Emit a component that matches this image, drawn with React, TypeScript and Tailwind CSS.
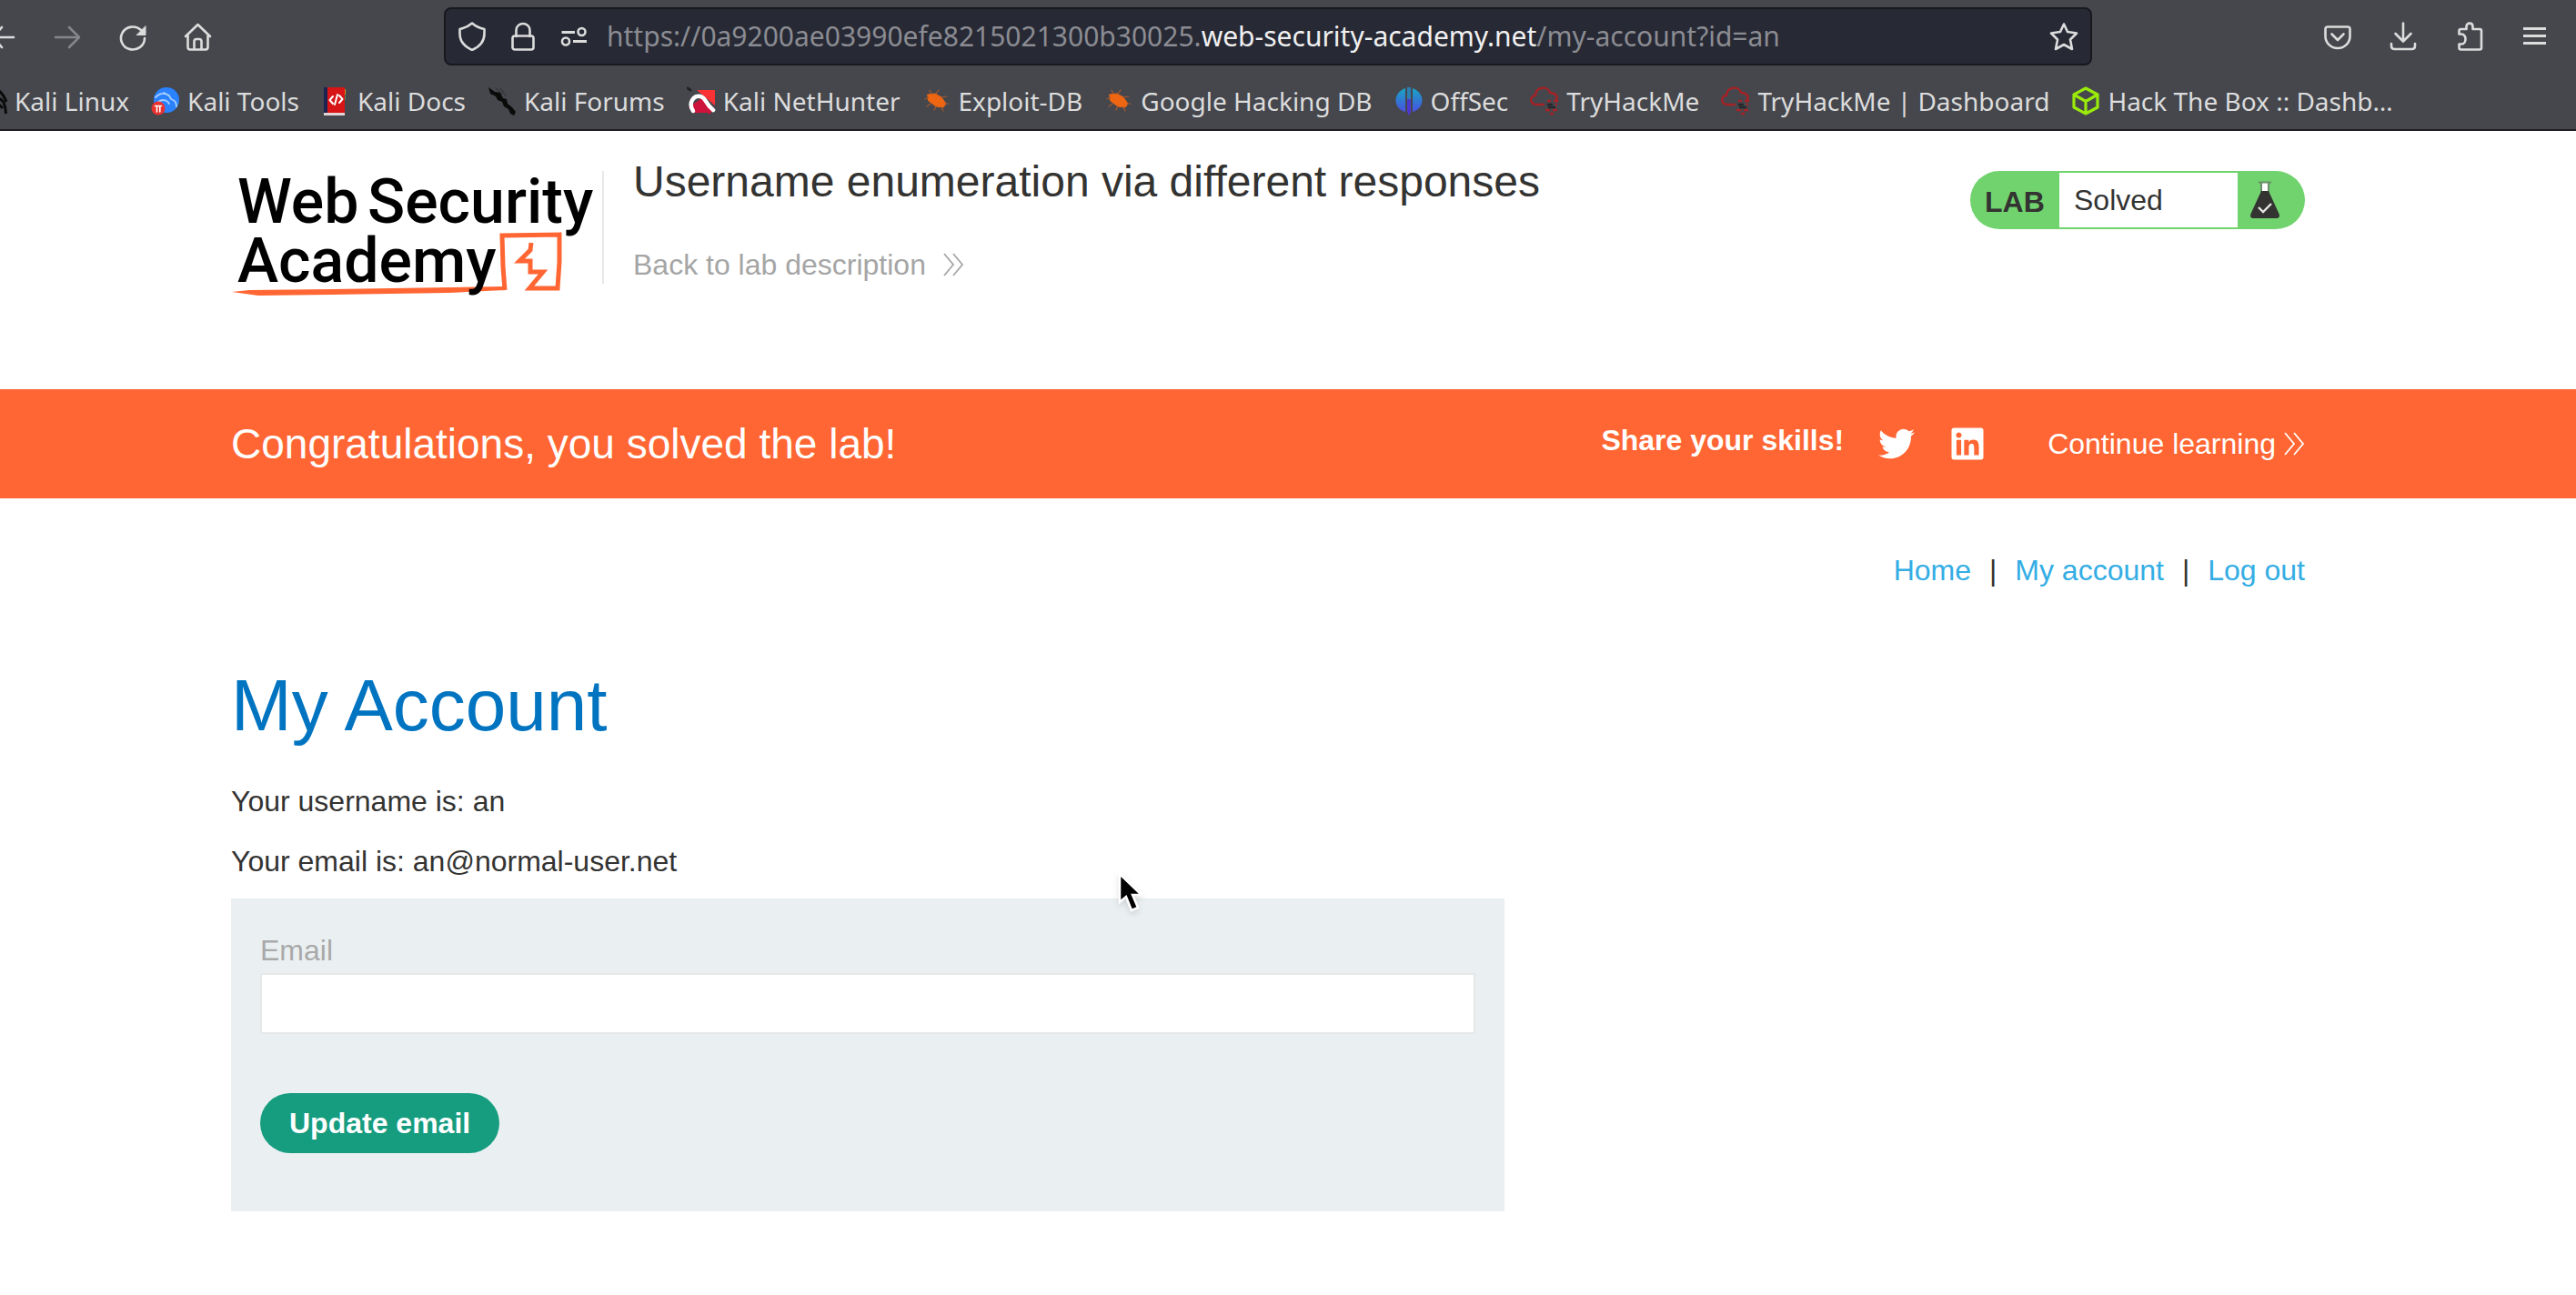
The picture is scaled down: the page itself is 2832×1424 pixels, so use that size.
import React from "react";
import { FaTwitter, FaLinkedin } from "react-icons/fa";

type IconProps = { className?: string; children: React.ReactNode };

function Icon({ className = "", children }: IconProps) {
  return (
    <svg
      viewBox="0 0 32 32"
      aria-hidden="true"
      className={`size-8 shrink-0 ${className}`}
      fill="none"
      stroke="currentColor"
      strokeWidth="2.6"
      strokeLinecap="round"
      strokeLinejoin="round"
    >
      {children}
    </svg>
  );
}

const ToolButton = ({ label, children }: { label: string; children: React.ReactNode }) => (
  <button type="button" aria-label={label} className="shrink-0">
    {children}
  </button>
);

function Toolbar() {
  return (
    <div className="flex h-20 items-center gap-10 pr-[30px]">
      <ToolButton label="Back">
        <svg viewBox="0 0 18 32" className="h-8 w-[18px]" fill="none" stroke="currentColor" strokeWidth="2.6" strokeLinecap="round">
          <path d="M-10 17H15M-8 17L2 6M-8 17L2 28" />
        </svg>
      </ToolButton>
      <ToolButton label="Forward">
        <Icon className="text-[#85868a]">
          <path d="M3 17H29M18 6L29 17L18 28" />
        </Icon>
      </ToolButton>
      <ToolButton label="Reload">
        <Icon>
          <path d="M29 18A13 12.500 0 1 1 25 9" />
          <path d="M30 5V14.500H20.500Z" fill="currentColor" strokeWidth="1" />
        </Icon>
      </ToolButton>
      <ToolButton label="Home">
        <Icon>
          <path d="M2 16L15.500 3L29 16M4.500 15V27.500Q4.500 30.500 7 30.500H24Q26.500 30.500 26.500 27.500V15" />
          <path d="M11.500 30V21.500Q11.500 19 14 19H17Q19.500 19 19.500 21.500V30" />
        </Icon>
      </ToolButton>

      <div className="ml-[214px] flex h-16 min-w-0 flex-1 items-center gap-6 rounded-lg border-2 border-[#18181e] bg-[#272935] px-[13px]">
        <ToolButton label="Tracking protection">
          <Icon>
            <path d="M16 1.500C20 5 25 7 29.500 8V13C29.500 21 24 27.500 16 31C8 27.500 2.500 21 2.500 13V8C7 7 12 5 16 1.500Z" />
          </Icon>
        </ToolButton>
        <ToolButton label="Connection secure">
          <Icon>
            <rect x="4.500" y="15.500" width="23" height="15" rx="2.500" />
            <path d="M8.500 16V9.500C8.500 -.5 23.500 -.5 23.500 9.500V16" />
          </Icon>
        </ToolButton>
        <ToolButton label="Site permissions">
          <Icon>
            <path d="M2.500 11.500H17M15 21.500H30" strokeLinecap="butt" strokeWidth="3" />
            <circle cx="24.500" cy="11" r="4" />
            <circle cx="7" cy="21.500" r="4" />
          </Icon>
        </ToolButton>
        <div
          role="textbox"
          aria-label="Address"
          tabIndex={0}
          className="-ml-1 min-w-0 flex-1 truncate text-[30px] leading-[40px] text-[#8b8c92]"
        >
          https://0a9200ae03990efe8215021300b30025.
          <span className="text-[#f0f0f0]">web-security-academy.net</span>
          /my-account?id=an
        </div>
        <ToolButton label="Bookmark this page">
          <Icon>
            <path d="M16 2.500L20 11L30 12.500L23 19.500L25 30L16 25L7 30L9 19.500L2 12.500L12 11Z" />
          </Icon>
        </ToolButton>
      </div>

      <div className="ml-[214px] flex items-center gap-10">
        <ToolButton label="Save to Pocket">
          <Icon>
            <path d="M5 5.500H27Q29.500 5.500 29.500 8V16C29.500 23 23.500 29 16 29C8.500 29 2.500 23 2.500 16V8Q2.500 5.500 5 5.500Z" />
            <path d="M9.500 13.500L16 20L22.500 13.500" />
          </Icon>
        </ToolButton>
        <ToolButton label="Downloads">
          <Icon>
            <path d="M16 1.500V21M7.500 13L16 21.500L24.500 13M3 24V26.500Q3 30 6.500 30H25.500Q29 30 29 26.500V24" />
          </Icon>
        </ToolButton>
        <ToolButton label="Extensions">
          <Icon>
            <path d="M5.500 13.500V10Q5.500 8 7.500 8H13.500V5C13.500 .5 20.500 .5 20.500 5V8H28Q30 8 30 10V28.500Q30 30.500 28 30.500H7.500Q5.500 30.500 5.500 28.500V24.500H8C14 24.500 14 13.500 8 13.500Z" />
          </Icon>
        </ToolButton>
        <ToolButton label="Menu">
          <Icon>
            <path d="M4 7.500H29M4 15.500H29M4 23.500H29" strokeLinecap="butt" strokeWidth="3" />
          </Icon>
        </ToolButton>
      </div>
    </div>
  );
}

const KaliTail = (
  <svg viewBox="0 0 8 32" className="h-8 w-2 shrink-0" fill="none" stroke="#0b0b0b" strokeWidth="3">
    <path d="M-2 4C3 8 5 11 7 17M-2 13C3 14 6 18 6.500 30M-1 20L3 24" />
  </svg>
);

const KaliTools = (
  <Icon>
    <circle cx="17" cy="15" r="14" fill="#2a82ff" stroke="none" />
    <path d="M5 12C12 5 20 8 22 14C26 15 28 18 28 22M7 18C12 13 18 15 20 19M14 7L20 10" stroke="#a9d0ff" strokeWidth="1.800" />
    <circle cx="8" cy="24" r="7.500" fill="#e8322f" stroke="none" />
    <path d="M4.500 21.500H11.500M6.500 22V28M9.800 22V28" stroke="#fff" strokeWidth="1.600" />
  </Icon>
);

const KaliDocs = (
  <Icon>
    <path d="M4 1H26V29H4Z" fill="#d91417" stroke="none" />
    <path d="M3 1H7V30H3Z" fill="#1c2352" stroke="none" />
    <path d="M26 3H27V9H26Z" fill="#d78b1c" stroke="none" />
    <path d="M26 9H27V15H26Z" fill="#3d8d4a" stroke="none" />
    <path d="M3 29H26V32H3Z" fill="#e3d6d6" stroke="none" />
    <path d="M13 11L9.500 15L13 19M20 10L23.500 14L20 18M18 9L15 20" stroke="#fff" strokeWidth="2" />
  </Icon>
);

const KaliForums = (
  <Icon>
    <path
      d="M1 1L8 6L14 7L17 13L21 14L22 19L27 23L31 28L29 32L25 30L23 25L18 22L16 17L11 15L9 11L3 8Z"
      fill="#0a0a0a"
      stroke="none"
    />
    <path d="M9 2L16 8M14 2L20 10" stroke="#2c2d31" strokeWidth="1" />
  </Icon>
);

const NetHunter = (
  <Icon>
    <path d="M11 4H31V21Z" fill="#fa3236" stroke="none" />
    <path d="M2 23L8 29H26L31 25L18 12Z" fill="#d0123a" stroke="none" />
    <path d="M7 27C1 18 8 9 15 11C21 12 20 19 29 26" stroke="#fff" strokeWidth="4.500" />
    <path d="M11 28C9 20 14 16 18 21L25 29" stroke="#c9153b" strokeWidth="3" />
    <path d="M1 2L4 4" stroke="#222" strokeWidth="3" />
  </Icon>
);

const ExploitBug = (
  <Icon>
    <path d="M6 9L14 8L21 12L26 19L23 23L15 22L7 16Z" fill="#ee6512" stroke="#ee6512" strokeWidth="1" />
    <path d="M10 8L8 4M15 8L18 4M21 12L27 11M25 19L29 19M6 13L3 14M9 19L5 22M15 22L13 26M21 23L23 27" stroke="#a5592f" strokeWidth="1.200" />
  </Icon>
);

const OffSec = (
  <Icon>
    <defs>
      <linearGradient id="offsec" x1="0" y1="0" x2="0" y2="1">
        <stop offset="0" stopColor="#17a6c4" />
        <stop offset="1" stopColor="#4a4fe0" />
      </linearGradient>
    </defs>
    <path d="M12 2V28C-2 24 -2 7 12 2ZM20 2V28C34 24 34 7 20 2Z" fill="url(#offsec)" stroke="none" />
    <path d="M14 1H18V28L16 32L14 28Z" fill="#4b39cf" stroke="none" />
    <path d="M14 1H18V14H14Z" fill="#2c7fb4" stroke="none" />
  </Icon>
);

const TryHackMe = (
  <Icon>
    <path d="M15 20H7C-1 19 0 10 6 10C6 0 20 -1 22 7C28 7 31 11 29 14" stroke="#a62226" strokeWidth="2.400" />
    <path d="M19 16H23M26 16H31M28 20H30M17 26H22M25 26H30M22 30H26" stroke="#a62226" strokeWidth="2.400" strokeLinecap="butt" />
    <path d="M19 20H25M20 23H28" stroke="#26272b" strokeWidth="2.400" strokeLinecap="butt" />
  </Icon>
);

const HackTheBox = (
  <Icon>
    <path d="M16 2L29 9V23L16 30L3 23V9ZM3 9L16 16.500L29 9M16 16.500V30" stroke="#9aea0a" strokeWidth="3.200" />
  </Icon>
);

const bookmarks: [string, React.ReactNode][] = [
  ["Kali Linux", KaliTail],
  ["Kali Tools", KaliTools],
  ["Kali Docs", KaliDocs],
  ["Kali Forums", KaliForums],
  ["Kali NetHunter", NetHunter],
  ["Exploit-DB", ExploitBug],
  ["Google Hacking DB", ExploitBug],
  ["OffSec", OffSec],
  ["TryHackMe", TryHackMe],
  ["TryHackMe | Dashboard", TryHackMe],
  ["Hack The Box :: Dashb…", HackTheBox],
];

function Bookmarks() {
  return (
    <nav aria-label="Bookmarks" className="flex h-[62px] items-center gap-6 overflow-hidden text-[28px] leading-[40px] whitespace-nowrap">
      {bookmarks.map(([label, icon]) => (
        <a key={label} href="#" className="flex shrink-0 items-center gap-2">
          {icon}
          {label}
        </a>
      ))}
    </nav>
  );
}

function Chevrons() {
  return (
    <svg viewBox="0 0 24 26" className="h-[26px] w-6 shrink-0" fill="none" stroke="currentColor" strokeWidth="1.800" aria-hidden="true">
      <path d="M2 1L12 13L2 25M12 1L22 13L12 25" />
    </svg>
  );
}

function Logo() {
  return (
    <svg viewBox="0 0 408 150" className="mt-[17px] h-[150px] w-[408px] shrink-0" role="img" aria-label="Web Security Academy">
      <path d="M1 133L20 131L110 130L240 128L299 127L301 131L240 134L110 136L30 137Z" fill="#ff6633" />
      <path
        d="M301 131L299 105L298 71L361 70L361 100L359 129H328L343 111H329V99H317L329 87L330 79"
        fill="none"
        stroke="#ff6633"
        strokeWidth="5"
      />
      <g className="font-[Roboto,sans-serif] text-[68px] font-medium" fill="#000">
        <text x="7" y="57">Web</text>
        <text x="150" y="57">Security</text>
        <text x="7" y="122">Academy</text>
      </g>
    </svg>
  );
}

function LabBadge() {
  return (
    <div className="mt-[17px] ml-auto flex h-16 w-[368px] shrink-0 overflow-hidden rounded-full bg-[#71d36e] py-0.5">
      <strong className="flex w-[98px] items-center pt-1 pl-4">LAB</strong>
      <span className="flex flex-1 items-center bg-white pl-4">Solved</span>
      <span className="flex w-[74px] items-center pl-3.5">
        <svg viewBox="0 0 32 42" className="h-[42px] w-8" aria-hidden="true">
          <path d="M11.500 2H20.500V13H11.500Z" fill="#fff" />
          <path d="M9 1.500H23M12 2V13M20 2V13" fill="none" stroke="#6b8f69" strokeWidth="2" />
          <path d="M12 11H20L31.500 36Q33 41 29 41H3Q-1 41 .5 36Z" fill="#333332" />
          <path d="M9 29L14 34L23 25" fill="none" stroke="#e6e6e6" strokeWidth="2.400" />
        </svg>
      </span>
    </div>
  );
}

export default function App() {
  return (
    <div className="relative min-h-screen bg-white font-['Liberation_Sans',Arial,sans-serif] text-[32px] leading-[40px] text-[#333332]">
      <div className="border-b-2 border-[#1e1f24] bg-[#45474d] font-['Noto_Sans',sans-serif] text-[#dcdcdc]">
        <Toolbar />
        <Bookmarks />
      </div>

      <header className="flex h-[284px] items-start pt-[27px] pr-[298px] pl-[254px]">
        <Logo />
        <div className="mt-[17px] h-[124px] w-0.5 shrink-0 bg-[#e8e8e8]" />
        <div className="ml-8">
          <h2 className="text-[48px] leading-[58px]">Username enumeration via different responses</h2>
          <a href="#" className="mt-[42px] flex items-center gap-[18px] text-[#a5a5a5]">
            Back to lab description
            <Chevrons />
          </a>
        </div>
        <LabBadge />
      </header>

      <section className="flex h-[120px] items-center bg-[#ff6633] pr-[298px] pl-[254px] text-white">
        <h3 className="text-[46px] leading-[56px]">Congratulations, you solved the lab!</h3>
        <strong className="ml-auto pb-2">Share your skills!</strong>
        <a href="#" aria-label="Share on Twitter" className="ml-[38px]">
          <FaTwitter className="size-10" />
        </a>
        <a href="#" aria-label="Share on LinkedIn" className="ml-[38px]">
          <FaLinkedin className="size-10" />
        </a>
        <a href="#" className="ml-[68px] flex items-center gap-2">
          Continue learning
          <Chevrons />
        </a>
      </section>

      <main className="pr-[298px] pl-[254px]">
        <nav aria-label="Account" className="flex justify-end gap-5 pt-[59px]">
          <a href="#" className="text-[#33ade4]">Home</a>
          <span>|</span>
          <a href="#" className="text-[#33ade4]">My account</a>
          <span>|</span>
          <a href="#" className="text-[#33ade4]">Log out</a>
        </nav>
        <h1 className="mt-[83px] text-[80px] leading-[92px] text-[#0074c0]">My Account</h1>
        <p className="mt-[39px]">Your username is: an</p>
        <p className="mt-[26px]">Your email is: an@normal-user.net</p>
        <form className="mt-[21px] max-w-[1400px] bg-[#eaf0f2] px-8 pt-[37px] pb-16" onSubmit={(e) => e.preventDefault()}>
          <label htmlFor="email" className="block text-[#a9a9a9]">Email</label>
          <input id="email" type="email" className="mt-[5px] block h-[67px] w-full border-2 border-[#e6e8e8] bg-white px-3 outline-none" />
          <button type="submit" className="mt-[65px] block h-[66px] rounded-full bg-[#169c7f] px-8 font-bold text-white">
            Update email
          </button>
        </form>
      </main>

      <svg viewBox="0 0 30 48" className="pointer-events-none absolute top-[958px] left-[1228px] h-12 w-[30px] drop-shadow-md" aria-hidden="true">
        <path d="M3 3V34L10 28L16 43L23 40L17 26H27Z" fill="#000" stroke="#fff" strokeWidth="2.500" />
      </svg>
    </div>
  );
}
